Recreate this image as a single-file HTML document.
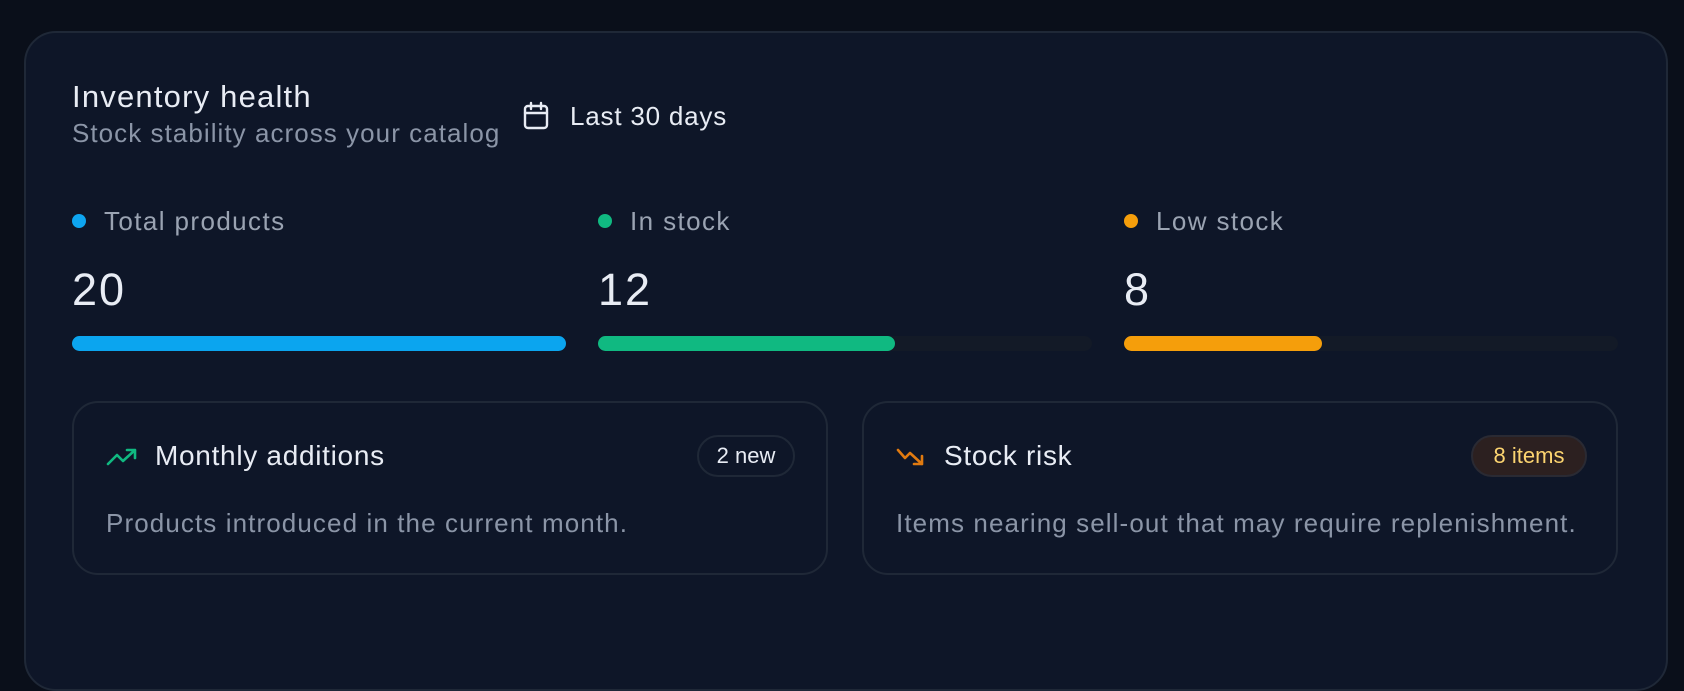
<!DOCTYPE html>
<html><head><style>
*{margin:0;padding:0;box-sizing:border-box}
body{width:1684px;height:652px;background:#0a0f1a;font-family:"Liberation Sans",sans-serif;overflow:hidden;position:relative}
.card{position:absolute;left:24px;top:31px;width:1644px;height:660px;background:#0e1628;border:2px solid #1f2837;border-radius:32px}
.abs{position:absolute;white-space:nowrap}
.t{color:#e8ecf4;font-size:31px;left:72px;top:79px;letter-spacing:1.2px}
.s{color:#8b95a7;font-size:26px;left:72px;top:118px;letter-spacing:1.05px}
.lbl{color:#9aa3b2;font-size:26px;top:206px;letter-spacing:1.4px}
.dot{width:14px;height:14px;border-radius:50%;top:214px}
.num{color:#e8ecf4;font-size:45px;top:264px;letter-spacing:2px}
.track{top:336px;height:15px;width:494px;border-radius:8px;background:#131a27}
.fill{height:15px;border-radius:8px}
.sub{top:401px;width:756px;height:174px;border:2px solid #1f2837;border-radius:26px}
.st{color:#e8ecf4;font-size:28px;top:440px;letter-spacing:0.7px}
.desc{color:#8b95a7;font-size:26px;top:508px;letter-spacing:1.1px}
.badge{top:435px;height:42px;border-radius:21px;font-size:22px;line-height:38px;text-align:center;border:2px solid #1f2837}
</style></head><body>
<div class="card"></div>
<div class="abs t">Inventory health</div>
<div class="abs s">Stock stability across your catalog</div>
<svg class="abs" style="left:522px;top:101px" width="28" height="30" viewBox="0 0 28 30" fill="none" stroke="#e8ecf4" stroke-width="2.4" stroke-linecap="round"><rect x="3" y="5" width="22" height="22" rx="3"/><path d="M3 12h22M9 2v6M19 2v6"/></svg>
<div class="abs" style="left:570px;top:101px;color:#e8ecf4;font-size:26px;letter-spacing:0.8px">Last 30 days</div>

<div class="abs dot" style="left:72px;background:#0ea5f0"></div>
<div class="abs lbl" style="left:104px">Total products</div>
<div class="abs num" style="left:72px">20</div>
<div class="abs track" style="left:72px"><div class="fill" style="width:494px;background:#0ba5ef"></div></div>

<div class="abs dot" style="left:598px;background:#10b981"></div>
<div class="abs lbl" style="left:630px">In stock</div>
<div class="abs num" style="left:598px">12</div>
<div class="abs track" style="left:598px"><div class="fill" style="width:297px;background:#10b981"></div></div>

<div class="abs dot" style="left:1124px;background:#f59e0b"></div>
<div class="abs lbl" style="left:1156px">Low stock</div>
<div class="abs num" style="left:1124px">8</div>
<div class="abs track" style="left:1124px"><div class="fill" style="width:198px;background:#f59e0b"></div></div>

<div class="abs sub" style="left:72px"></div>
<svg class="abs" style="left:106px;top:446px" width="32" height="22" viewBox="0 0 32 22" fill="none" stroke="#10b981" stroke-width="2.6" stroke-linecap="round" stroke-linejoin="round"><path d="M2 18l9-9 6 6 12-11M21 4h8v8"/></svg>
<div class="abs st" style="left:155px">Monthly additions</div>
<div class="abs badge" style="left:697px;width:98px;color:#e8ecf4">2 new</div>
<div class="abs desc" style="left:106px">Products introduced in the current month.</div>

<div class="abs sub" style="left:862px"></div>
<svg class="abs" style="left:896px;top:446px" width="32" height="22" viewBox="0 0 32 22" fill="none" stroke="#e07a10" stroke-width="2.6" stroke-linecap="round" stroke-linejoin="round"><path d="M2 4l7 8 5-5 12 11M26 10v8h-8"/></svg>
<div class="abs st" style="left:944px">Stock risk</div>
<div class="abs badge" style="left:1471px;width:116px;color:#fcd470;background:#2c2020;border-color:#2a2a33">8 items</div>
<div class="abs desc" style="left:896px">Items nearing sell-out that may require replenishment.</div>
</body></html>
